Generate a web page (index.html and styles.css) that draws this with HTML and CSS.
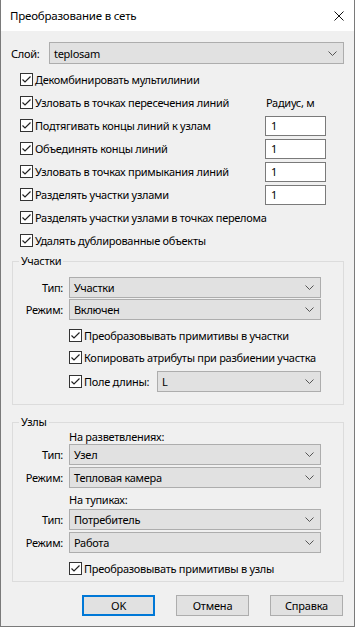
FILE: index.html
```html
<!DOCTYPE html>
<html lang="ru">
<head>
<meta charset="utf-8">
<link rel="stylesheet" href="styles.css">
</head>
<body>
<div class="window">
  <div class="titlebar">
    <span class="title">Преобразование в сеть</span>
    <svg class="close" width="10" height="10" viewBox="0 0 10 10"><path d="M0.5 0.5L9.5 9.5M9.5 0.5L0.5 9.5" stroke="#111" stroke-width="1"/></svg>
  </div>
  <div class="content">
    <div class="layer-row">
      <span class="lbl">Слой:</span>
      <div class="combo layer-combo"><span>teplosam</span><svg class="chev" width="9" height="5" viewBox="0 0 9 5"><path d="M0.5 0.5L4.5 4.5L8.5 0.5" fill="none" stroke="#555" stroke-width="1"/></svg></div>
    </div>

    <div class="checks">
      <div class="cb-row wide"><span class="cb"><svg width="13" height="13" viewBox="0 0 13 13"><rect x="0.5" y="0.5" width="12" height="12" fill="#fff" stroke="#333"/><path d="M2.5 6.5L5 9L10.5 3.5" fill="none" stroke="#222" stroke-width="1.2"/></svg></span>Декомбинировать мультилинии</div>

      <div class="cb-row"><span class="cb"><svg width="13" height="13" viewBox="0 0 13 13"><rect x="0.5" y="0.5" width="12" height="12" fill="#fff" stroke="#333"/><path d="M2.5 6.5L5 9L10.5 3.5" fill="none" stroke="#222" stroke-width="1.2"/></svg></span>Узловать в точках пересечения линий</div>
      <div class="right radius">Радиус, м</div>

      <div class="cb-row"><span class="cb"><svg width="13" height="13" viewBox="0 0 13 13"><rect x="0.5" y="0.5" width="12" height="12" fill="#fff" stroke="#333"/><path d="M2.5 6.5L5 9L10.5 3.5" fill="none" stroke="#222" stroke-width="1.2"/></svg></span>Подтягивать концы линий к узлам</div>
      <div class="right"><div class="input">1</div></div>

      <div class="cb-row"><span class="cb"><svg width="13" height="13" viewBox="0 0 13 13"><rect x="0.5" y="0.5" width="12" height="12" fill="#fff" stroke="#333"/><path d="M2.5 6.5L5 9L10.5 3.5" fill="none" stroke="#222" stroke-width="1.2"/></svg></span>Объединять концы линий</div>
      <div class="right"><div class="input">1</div></div>

      <div class="cb-row"><span class="cb"><svg width="13" height="13" viewBox="0 0 13 13"><rect x="0.5" y="0.5" width="12" height="12" fill="#fff" stroke="#333"/><path d="M2.5 6.5L5 9L10.5 3.5" fill="none" stroke="#222" stroke-width="1.2"/></svg></span>Узловать в точках примыкания линий</div>
      <div class="right"><div class="input">1</div></div>

      <div class="cb-row"><span class="cb"><svg width="13" height="13" viewBox="0 0 13 13"><rect x="0.5" y="0.5" width="12" height="12" fill="#fff" stroke="#333"/><path d="M2.5 6.5L5 9L10.5 3.5" fill="none" stroke="#222" stroke-width="1.2"/></svg></span>Разделять участки узлами</div>
      <div class="right"><div class="input">1</div></div>

      <div class="cb-row wide"><span class="cb"><svg width="13" height="13" viewBox="0 0 13 13"><rect x="0.5" y="0.5" width="12" height="12" fill="#fff" stroke="#333"/><path d="M2.5 6.5L5 9L10.5 3.5" fill="none" stroke="#222" stroke-width="1.2"/></svg></span>Разделять участки узлами в точках перелома</div>

      <div class="cb-row wide"><span class="cb"><svg width="13" height="13" viewBox="0 0 13 13"><rect x="0.5" y="0.5" width="12" height="12" fill="#fff" stroke="#333"/><path d="M2.5 6.5L5 9L10.5 3.5" fill="none" stroke="#222" stroke-width="1.2"/></svg></span>Удалять дублированные объекты</div>
    </div>

    <fieldset class="group group-sections">
      <legend>Участки</legend>
      <div class="form-grid">
        <span class="flbl">Тип:</span>
        <div class="combo"><span>Участки</span><svg class="chev" width="9" height="5" viewBox="0 0 9 5"><path d="M0.5 0.5L4.5 4.5L8.5 0.5" fill="none" stroke="#555" stroke-width="1"/></svg></div>
        <span class="flbl">Режим:</span>
        <div class="combo"><span>Включен</span><svg class="chev" width="9" height="5" viewBox="0 0 9 5"><path d="M0.5 0.5L4.5 4.5L8.5 0.5" fill="none" stroke="#555" stroke-width="1"/></svg></div>
      </div>
      <div class="sub-checks">
        <div class="cb-row"><span class="cb"><svg width="13" height="13" viewBox="0 0 13 13"><rect x="0.5" y="0.5" width="12" height="12" fill="#fff" stroke="#333"/><path d="M2.5 6.5L5 9L10.5 3.5" fill="none" stroke="#222" stroke-width="1.2"/></svg></span>Преобразовывать примитивы в участки</div>
        <div class="cb-row"><span class="cb"><svg width="13" height="13" viewBox="0 0 13 13"><rect x="0.5" y="0.5" width="12" height="12" fill="#fff" stroke="#333"/><path d="M2.5 6.5L5 9L10.5 3.5" fill="none" stroke="#222" stroke-width="1.2"/></svg></span>Копировать атрибуты при разбиении участка</div>
        <div class="cb-row len-row"><span class="cb"><svg width="13" height="13" viewBox="0 0 13 13"><rect x="0.5" y="0.5" width="12" height="12" fill="#fff" stroke="#333"/><path d="M2.5 6.5L5 9L10.5 3.5" fill="none" stroke="#222" stroke-width="1.2"/></svg></span><span class="len-lbl">Поле длины:</span>
          <div class="combo len-combo"><span>L</span><svg class="chev" width="9" height="5" viewBox="0 0 9 5"><path d="M0.5 0.5L4.5 4.5L8.5 0.5" fill="none" stroke="#555" stroke-width="1"/></svg></div>
        </div>
      </div>
    </fieldset>

    <fieldset class="group group-nodes">
      <legend>Узлы</legend>
      <div class="form-grid">
        <span></span><span class="caption cap1">На разветвлениях:</span>
        <span class="flbl">Тип:</span>
        <div class="combo"><span>Узел</span><svg class="chev" width="9" height="5" viewBox="0 0 9 5"><path d="M0.5 0.5L4.5 4.5L8.5 0.5" fill="none" stroke="#555" stroke-width="1"/></svg></div>
        <span class="flbl gap-top">Режим:</span>
        <div class="combo gap-top"><span>Тепловая камера</span><svg class="chev" width="9" height="5" viewBox="0 0 9 5"><path d="M0.5 0.5L4.5 4.5L8.5 0.5" fill="none" stroke="#555" stroke-width="1"/></svg></div>
        <span></span><span class="caption cap2">На тупиках:</span>
        <span class="flbl">Тип:</span>
        <div class="combo"><span>Потребитель</span><svg class="chev" width="9" height="5" viewBox="0 0 9 5"><path d="M0.5 0.5L4.5 4.5L8.5 0.5" fill="none" stroke="#555" stroke-width="1"/></svg></div>
        <span class="flbl gap-top">Режим:</span>
        <div class="combo gap-top"><span>Работа</span><svg class="chev" width="9" height="5" viewBox="0 0 9 5"><path d="M0.5 0.5L4.5 4.5L8.5 0.5" fill="none" stroke="#555" stroke-width="1"/></svg></div>
      </div>
      <div class="sub-checks nodes-checks">
        <div class="cb-row"><span class="cb"><svg width="13" height="13" viewBox="0 0 13 13"><rect x="0.5" y="0.5" width="12" height="12" fill="#fff" stroke="#333"/><path d="M2.5 6.5L5 9L10.5 3.5" fill="none" stroke="#222" stroke-width="1.2"/></svg></span>Преобразовывать примитивы в узлы</div>
      </div>
    </fieldset>

    <div class="buttons">
      <button class="btn default">OK</button>
      <button class="btn">Отмена</button>
      <button class="btn">Справка</button>
    </div>
  </div>
</div>
</body>
</html>
```

FILE: styles.css
```css
* { box-sizing: border-box; }
html, body { margin: 0; padding: 0; background: #ffffff; }
body {
  font-family: "Noto Sans", "Open Sans", sans-serif;
  font-size: 11px;
  letter-spacing: -0.28px;
  color: #000;
}
.window {
  width: 355px;
  height: 627px;
  border: 1px solid #7a7a7a;
  border-top: none;
  background: #f0f0f0;
  display: flex;
  flex-direction: column;
}
.titlebar {
  height: 31px;
  background: #ffffff;
  display: flex;
  align-items: center;
  padding-left: 9px;
  padding-right: 10px;
}
.title { flex: 1; font-size: 11.5px; letter-spacing: -0.2px; }
.close { display: block; }
.content { flex: 1; }

.layer-row {
  display: flex;
  align-items: center;
  margin-top: 11px;
  padding-left: 10px;
  height: 22px;
}
.lbl { width: 38px; }
.combo {
  height: 21px;
  background: #e1e1e1;
  border: 1px solid #adadad;
  display: flex;
  align-items: center;
  justify-content: space-between;
  padding-left: 4px;
  padding-right: 6px;
  white-space: nowrap;
}
.layer-combo { width: 295px; height: 22px; }
.chev { display: block; }

.checks {
  margin-top: 4px;
  margin-left: 19px;
  display: grid;
  grid-template-columns: 245px 61px;
  grid-auto-rows: 23px;
}
.cb-row {
  display: flex;
  align-items: center;
  white-space: nowrap;
}
.cb-row.wide { grid-column: 1 / -1; }
.cb { width: 15px; height: 13px; display: block; flex: none; }
.cb svg { display: block; }
.right { display: flex; align-items: center; }
.radius { padding-left: 1px; }
.input {
  width: 61px;
  height: 20px;
  background: #fff;
  border: 1px solid #7a7a7a;
  padding-left: 5px;
  display: flex;
  align-items: center;
}

.group {
  margin: 0 10px 0 11px;
  padding: 0;
  border: 1px solid #dcdcdc;
  min-width: 0;
}
.group legend {
  margin-left: 6px;
  padding: 0 2px;
  line-height: 16px;
}
.group-sections { margin-top: 1px; }
.group-nodes { margin-top: 9px; }

.form-grid {
  display: grid;
  grid-template-columns: 50px 252px;
  column-gap: 6px;
  row-gap: 1px;
  align-items: center;
}
.group-sections .form-grid { margin-top: 8px; }
.flbl { text-align: right; }
.form-grid .combo { height: 21px; }
.group-nodes .form-grid { row-gap: 0; }
.gap-top { margin-top: 2px; }
.caption { line-height: 14px; }
.cap2 { line-height: 19px; padding-top: 2px; }

.sub-checks {
  margin-left: 56px;
  margin-top: 4px;
  display: flex;
  flex-direction: column;
}
.sub-checks .cb-row { height: 22px; }
.sub-checks .len-row { height: 25px; margin-top: 1px; margin-bottom: 10px; }
.len-lbl { width: 73px; }
.len-combo { width: 164px; }
.nodes-checks { margin-top: 4px; margin-bottom: 2px; }

.buttons {
  display: flex;
  justify-content: flex-end;
  gap: 21px;
  margin-top: 13px;
  padding-right: 11px;
}
.btn {
  width: 73px;
  height: 21px;
  background: #e1e1e1;
  border: 1px solid #adadad;
  font-family: inherit;
  font-size: 11px;
  letter-spacing: -0.2px;
  color: #000;
  padding: 0;
  border-radius: 0;
}
.btn.default { border: 2px solid #0078d7; }
```
